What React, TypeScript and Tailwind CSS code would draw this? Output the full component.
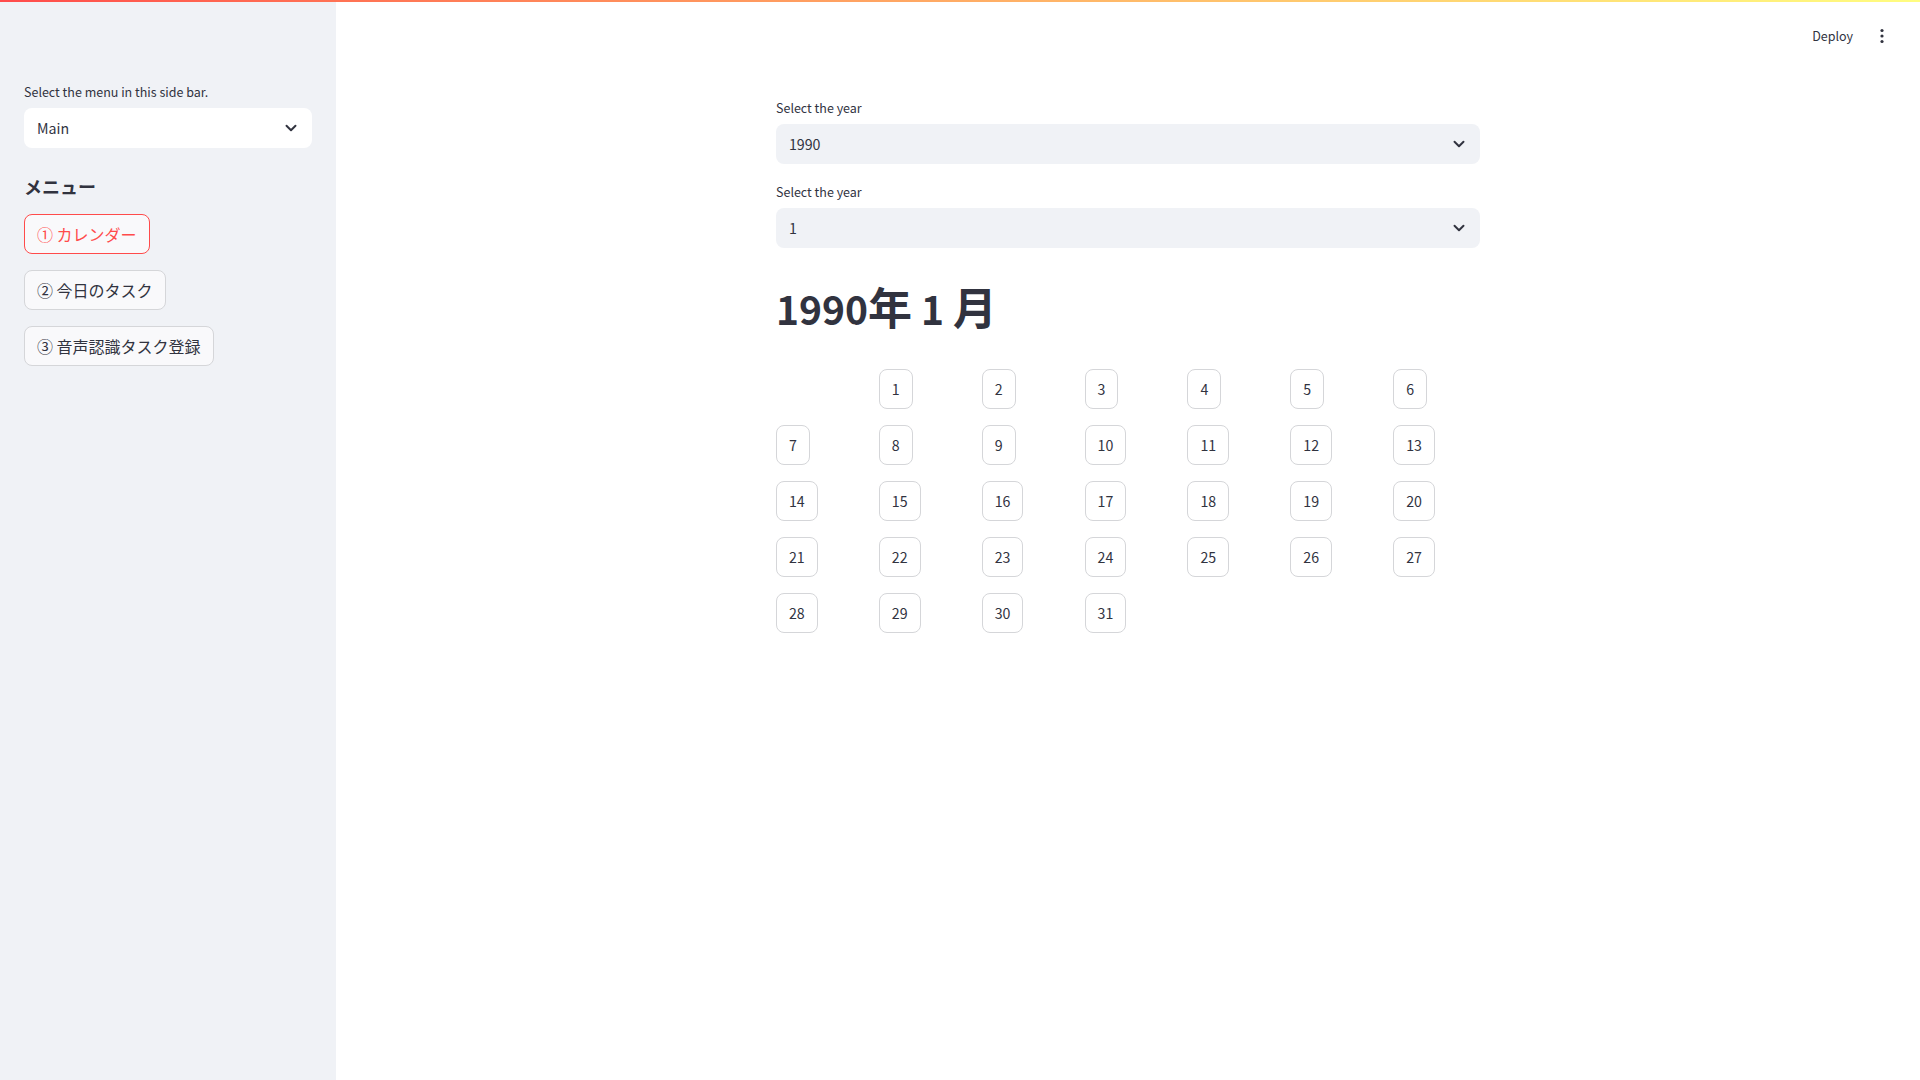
import { ChevronDown } from 'lucide-react';

const font = { fontFamily: '"Noto Sans CJK JP", "Noto Sans", sans-serif' };

// Latin glyphs in Noto Sans CJK run a bit large, so Latin-only text is set slightly smaller
const Chevron = () => (
  <ChevronDown className="w-[18px] h-[18px] text-[#31333f]" strokeWidth={2.6} />
);

const Select = ({ value, white }: { value: string; white?: boolean }) => (
  <div
    className={`h-10 rounded-lg flex items-center justify-between pl-[13px] pr-3 text-[14.2px] text-[#31333f] ${
      white ? 'bg-white' : 'bg-[#f0f2f6]'
    }`}
  >
    <span className="leading-6">{value}</span>
    <Chevron />
  </div>
);

const SideButton = ({ label, active }: { label: string; active?: boolean }) => (
  <button
    className={`h-10 px-3 rounded-lg border bg-[#f9f9fb] text-base leading-6 ${
      active ? 'border-[#ff4b4b] text-[#ff4b4b]' : 'border-[#d5d6d9] text-[#31333f]'
    }`}
  >
    {label}
  </button>
);

const Label = ({ children }: { children: string }) => (
  <div className="h-6 mb-1 text-[12.5px] leading-6">{children}</div>
);

const days: (number | null)[] = [null, ...Array.from({ length: 31 }, (_, i) => i + 1)];

export default function App() {
  return (
    <div className="relative flex h-[1080px] w-full bg-white text-[#31333f]" style={font}>
      <div className="absolute top-0 left-0 right-0 h-[2px] bg-gradient-to-r from-[#ff4b4b] to-[#fffd80] z-10" />

      <aside className="w-[336px] shrink-0 bg-[#f0f2f6] px-6 pt-[80px]">
        <Label>Select the menu in this side bar.</Label>
        <Select value="Main" white />
        <div className="pt-[27px] pb-[17px] text-lg font-bold leading-[22px]">メニュー</div>
        <div className="flex flex-col items-start gap-4">
          <SideButton label="① カレンダー" active />
          <SideButton label="② 今日のタスク" />
          <SideButton label="③ 音声認識タスク登録" />
        </div>
      </aside>

      <main className="flex-1 flex flex-col">
        <header className="h-[72px] flex items-center justify-end pr-[30px] gap-[21px]">
          <span className="text-[12.5px] leading-5">Deploy</span>
          <svg width="16" height="16" viewBox="0 0 16 16" fill="#31333f">
            <circle cx="8" cy="2.5" r="1.6" />
            <circle cx="8" cy="8" r="1.6" />
            <circle cx="8" cy="13.5" r="1.6" />
          </svg>
        </header>

        <div className="w-[704px] mx-auto pt-6 flex flex-col gap-4">
          <div>
            <Label>Select the year</Label>
            <Select value="1990" />
          </div>
          <div>
            <Label>Select the year</Label>
            <Select value="1" />
          </div>
          <h1 className="pt-4 pb-5 text-[44px] font-bold leading-[1.2]">
            <span className="text-[39px]">1990</span>年<span className="text-[39px]"> 1 </span>月
          </h1>
          <div className="grid grid-cols-7 gap-4">
            {days.map((d, i) => (
              <div key={i} className="h-10">
                {d !== null && (
                  <button className="h-10 px-3 rounded-lg border border-[#d5d6d9] bg-white text-[14.2px] leading-6 text-[#31333f]">
                    {d}
                  </button>
                )}
              </div>
            ))}
          </div>
        </div>
      </main>
    </div>
  );
}
